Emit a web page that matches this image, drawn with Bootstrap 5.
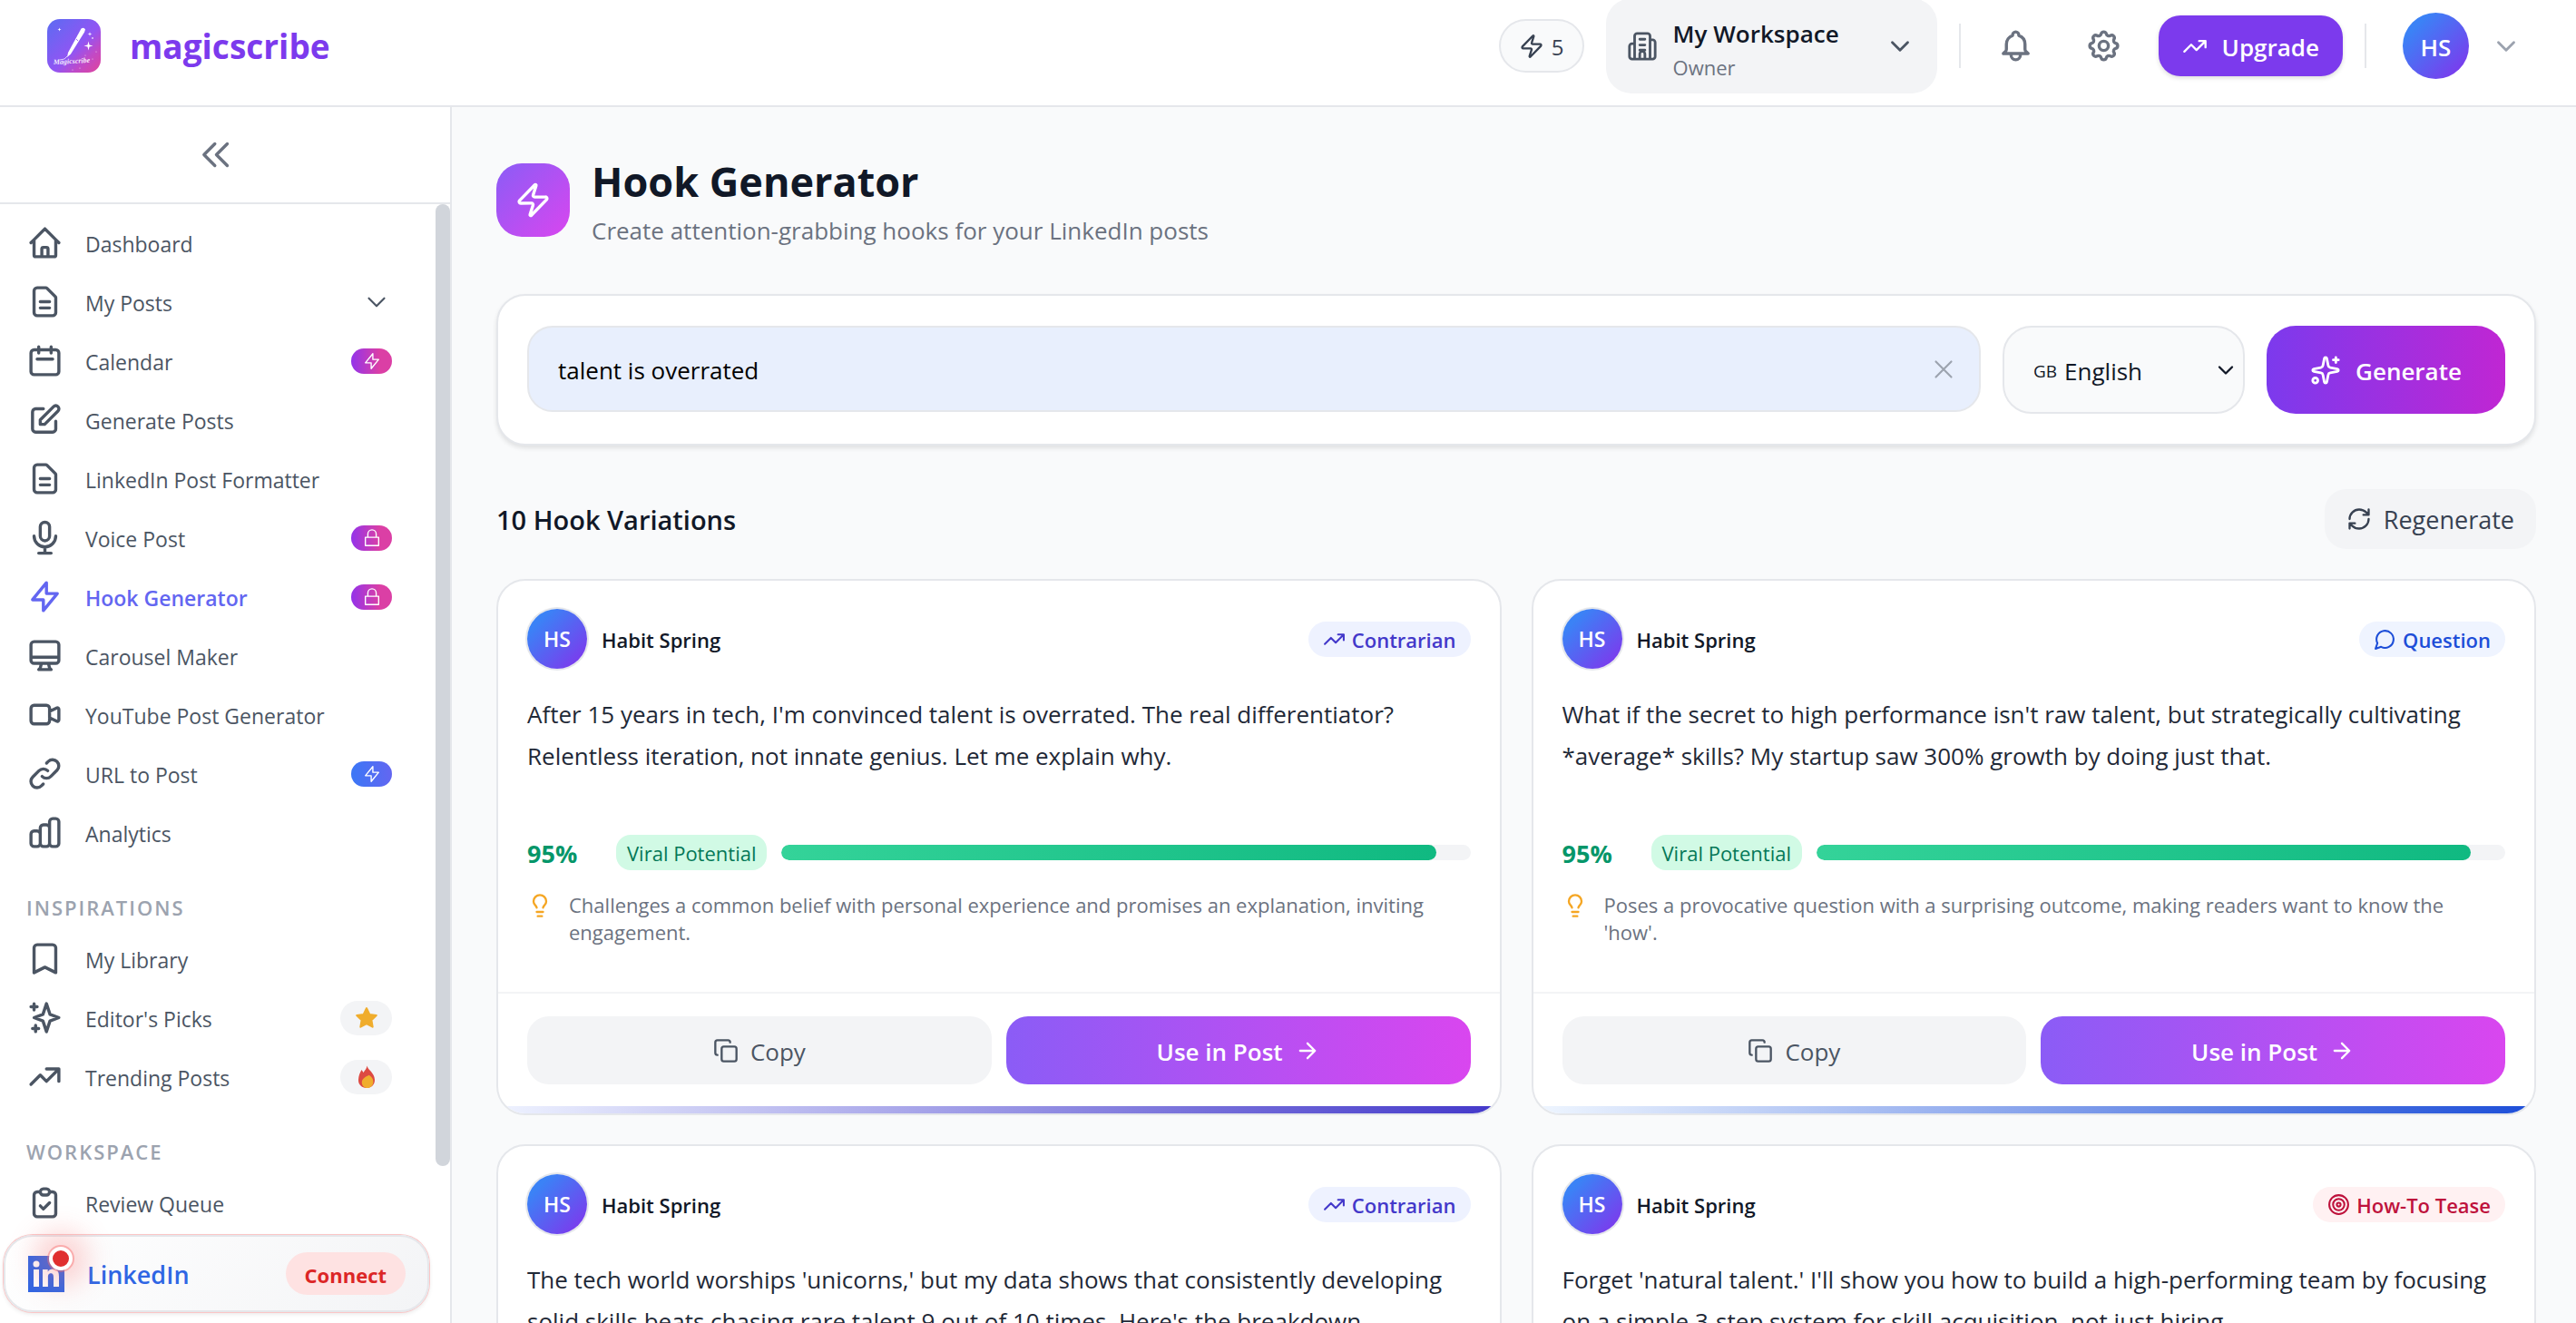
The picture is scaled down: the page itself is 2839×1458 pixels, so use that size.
<!DOCTYPE html>
<html lang="en">
<head>
<meta charset="utf-8">
<meta name="viewport" content="width=device-width, initial-scale=1">
<title>magicscribe – Hook Generator</title>
<link href="https://cdn.jsdelivr.net/npm/bootstrap@5.3.0/dist/css/bootstrap.min.css" rel="stylesheet">
<style>
  :root { --line:#e5e7eb; --ink:#111827; --muted:#6b7280; --slate:#4b5563; --violet:#7c3aed; }
  body { font-family:"Open Sans","Noto Sans",sans-serif; font-size:26px; line-height:40px; color:var(--ink); background:#f9fafb; }
  a { text-decoration:none; }
  button, .btn { font-family:inherit; }
  .fw-semibold { font-weight:600 !important; }
  .ico { fill:none; stroke:currentColor; stroke-width:2; stroke-linecap:round; stroke-linejoin:round; flex:none; display:block; }
  .ico-xl { width:41px; height:41px; }
  .ico-lg { width:34px; height:34px; }
  .ico-md { width:28px; height:28px; }
  .ico-sm { width:25px; height:25px; }
  .thin { stroke-width:1.5; }
  .cap { padding-top:2px; }

  /* top bar */
  .topbar { height:118px; padding:0 44px 15px 52px; border-bottom:2px solid var(--line); background:#fff; }
  .brandlink { gap:32px; }
  .brandmark { width:59px; height:59px; }
  .brandname { font-size:37px; font-weight:700; color:var(--violet); }
  .tools { gap:24px; }
  .credits { height:59px; width:94px; gap:8px; border:2px solid var(--line); background:#f9fafb; font-size:24px; color:#374151; }
  .workspace { height:105px; min-width:365px; padding:0 24px 0 23px; gap:17px; border:0; border-radius:28px; background:#f3f4f6; color:var(--slate); text-align:left; }
  .workspace-text { padding-top:6px; }
  .workspace-name { font-weight:600; color:var(--ink); line-height:40px; }
  .workspace-role { font-size:22px; line-height:34px; color:var(--muted); }
  .rule { width:2px; height:49px; background:var(--line); }
  .iconbtn { padding:16px; border:0; background:none; color:var(--muted); }
  .upgrade { height:67px; padding:0 26px; gap:16px; border:0; border-radius:24px; background:var(--violet); color:#fff; font-weight:600; box-shadow:0 2px 5px rgba(0,0,0,.14); }
  .user { padding:0 16px; gap:24px; border:0; background:none; color:#9ca3af; }
  .face { display:flex; align-items:center; justify-content:center; border-radius:50%; background:linear-gradient(135deg,#3b82f6 20%,#7c3aed 90%); color:#fff; font-weight:600; }
  .face-lg { width:73px; height:73px; font-size:26px; }
  .face-md { width:66px; height:66px; font-size:23px; box-shadow:0 0 0 2px var(--line); }

  /* sidebar */
  .side { width:498px; flex:none; border-right:2px solid var(--line); background:#fff; }
  .collapse-row { height:107px; padding-right:20px; border-bottom:2px solid var(--line); }
  .collapse-row button { border:0; background:none; color:var(--muted); padding:0; }
  .menu { padding-top:10px; }
  .menu a { height:65px; padding:0 48px 0 29px; gap:24px; font-size:23px; color:var(--slate); }
  .menu a.current { color:#6366f1; font-weight:600; }
  .menu h2 { margin:0; padding:34px 0 8px 29px; font-size:22px; line-height:32px; font-weight:600; letter-spacing:2px; color:#9ca3af; }
  .tag { width:45px; height:28px; color:#fff; }
  .tag svg { width:22px; height:22px; }
  .tag-hot { background:linear-gradient(90deg,#9333ea,#db3fa5 70%); }
  .tag-blue { background:linear-gradient(90deg,#3b77f6,#6366f1); }
  .tag-emoji { width:57px; height:38px; background:#f3f4f6; }
  .tag-emoji svg { width:26px; height:26px; }
  .track { width:16px; flex:none; }
  .thumb { height:86%; border-radius:8px; background:#d1d5db; }
  .connect { left:4px; right:23px; bottom:12px; height:85px; padding:0 24px 0 25px; gap:25px; border:2px solid var(--line); border-radius:32px; background:linear-gradient(135deg,#fff,#f3f4f6); box-shadow:0 0 0 1px #fbc6c6,0 2px 5px rgba(0,0,0,.1); color:#2f66e4; }
  .connect-name { font-size:27px; font-weight:600; }
  .connect-pill { height:47px; padding:0 21px; background:#fee2e2; color:#dc2626; font-size:22px; font-weight:700; }
  .ping { width:26px; height:26px; right:-9px; top:-10px; border:4px solid #fff; border-radius:50%; background:#e02f2f; box-shadow:0 0 0 2px rgba(248,113,113,.45),0 0 28px 18px rgba(248,113,113,.28); }

  /* page */
  .page { padding:48px 44px 0 49px; }
  .page-icon { width:81px; height:81px; border-radius:28px; background:linear-gradient(135deg,#8b5cf6,#d946ef); color:#fff; }
  .page-title { margin:0; font-size:45px; line-height:68px; font-weight:700; }
  .page-sub { margin:0; line-height:41px; color:var(--muted); }
  .panel { background:#fff; border:2px solid var(--line); border-radius:32px; }
  .ask { margin-top:49px; padding:33px 32px; gap:24px; box-shadow:0 3px 5px rgba(0,0,0,.1); }
  .ask-input { height:95px; padding:2px 80px 0 32px; border:2px solid var(--line); border-radius:28px; background:#e8effd; font-size:26px; color:#000; }
  .ask-clear { right:24px; top:31px; border:0; padding:0; background:none; color:#9ca3af; }
  .lang { width:267px; height:97px; padding:0 5px 0 32px; gap:8px; border:2px solid var(--line); border-radius:32px; background:#f9fafb; }
  .lang-code { font-size:19px; font-weight:500; }
  .lang select { appearance:none; border:0; background:none; flex:1; min-width:0; font:inherit; color:inherit; padding:2px 0 0; }
  .generate { width:263px; height:97px; gap:16px; border:0; border-radius:32px; background:linear-gradient(90deg,#7c3aed,#c026d3); color:#fff; font-weight:600; }
  .results { margin:48px 0 33px; }
  .results h2 { margin:0; font-size:29px; font-weight:600; line-height:40px; }
  .regen { height:66px; padding:0 24px; gap:13px; border:0; border-radius:24px; background:#f3f4f6; color:#374151; font-size:27px; font-weight:500; }
  .hooks { --bs-gutter-x:33px; --bs-gutter-y:32px; }
  .hook { overflow:hidden; }
  .hook-body { padding:31px 32px 51px; }
  .hook-name { font-size:22px; font-weight:600; }
  .kind { height:39px; padding:0 16px; gap:7px; font-size:22px; font-weight:600; }
  .kind-indigo { background:#eef2ff; color:#4338ca; }
  .kind-blue { background:#eff4ff; color:#1d4ed8; }
  .kind-rose { background:#fff1f2; color:#be123c; }
  .hook-text { margin:27px 0 18px; min-height:138px; line-height:46px; color:#1f2937; }
  .score { height:39px; gap:16px; }
  .score-num { min-width:82px; font-size:27px; font-weight:700; color:#059669; }
  .score-tag { height:39px; padding:0 12px; border-radius:16px; background:#d1fae5; color:#047857; font-size:22px; }
  .meter { height:17px; background:#f3f4f6; border-radius:9px; }
  .meter .progress-bar { border-radius:9px; background:linear-gradient(90deg,#34d399,#10b981); }
  .why { margin-top:23px; gap:18px; font-size:22px; line-height:30px; color:var(--muted); }
  .why svg { color:#f5a623; margin-top:2px; }
  .hook-foot { padding:25px 32px 24px; gap:16px; border-top:2px solid #f3f4f6; }
  .act { flex:1; height:75px; gap:13px; border:0; border-radius:24px; }
  .act-copy { background:#f3f4f6; color:var(--slate); }
  .act-use { background:linear-gradient(90deg,#8b5cf6,#d946ef); color:#fff; font-weight:600; }
  .strip { height:8px; }
  .strip-indigo { background:linear-gradient(90deg,#eef2ff,#4338ca); }
  .strip-blue { background:linear-gradient(90deg,#eff6ff,#1d4ed8); }
  .strip-rose { background:linear-gradient(90deg,#fff1f2,#be123c); }
</style>
<script src="https://cdn.jsdelivr.net/npm/bootstrap@5.3.0/dist/js/bootstrap.bundle.min.js"></script>
</head>
<body class="vh-100 d-flex flex-column overflow-hidden">

<svg class="d-none" aria-hidden="true">
  <symbol id="home" viewBox="0 0 24 24"><path d="M3 12l2-2m0 0l7-7 7 7M5 10v10a1 1 0 001 1h12a1 1 0 001-1V10l2 2m-2-2M10 21v-5a1 1 0 011-1h2a1 1 0 011 1v5"/></symbol>
  <symbol id="doc" viewBox="0 0 24 24"><path d="M9 12h6m-6 4h6m2 5H7a2 2 0 01-2-2V5a2 2 0 012-2h5.586a1 1 0 01.707.293l5.414 5.414a1 1 0 01.293.707V19a2 2 0 01-2 2z"/></symbol>
  <symbol id="calendar" viewBox="0 0 24 24"><path d="M8 7V3m8 4V3m-9 8h10M5 21h14a2 2 0 002-2V7a2 2 0 00-2-2H5a2 2 0 00-2 2v12a2 2 0 002 2z"/></symbol>
  <symbol id="edit" viewBox="0 0 24 24"><path d="M11 5H6a2 2 0 00-2 2v11a2 2 0 002 2h11a2 2 0 002-2v-5m-1.414-9.414a2 2 0 112.828 2.828L11.828 15H9v-2.828l8.586-8.586z"/></symbol>
  <symbol id="mic" viewBox="0 0 24 24"><path d="M19 11a7 7 0 01-7 7m0 0a7 7 0 01-7-7m7 7v4m0 0H8m4 0h4m-4-8a3 3 0 01-3-3V5a3 3 0 116 0v6a3 3 0 01-3 3z"/></symbol>
  <symbol id="bolt" viewBox="0 0 24 24"><path d="M13 10V3L4 14h7v7l9-11h-7z"/></symbol>
  <symbol id="zap" viewBox="0 0 24 24"><path d="M4 14a1 1 0 0 1-.78-1.63l9.9-10.2a.5.5 0 0 1 .86.46l-1.92 6.02A1 1 0 0 0 13 10h7a1 1 0 0 1 .78 1.63l-9.9 10.2a.5.5 0 0 1-.86-.46l1.92-6.02A1 1 0 0 0 11 14z"/></symbol>
  <symbol id="desktop" viewBox="0 0 24 24"><path d="M9.75 17L9 20l-1 1h8l-1-1-.75-3M3 13h18M5 17h14a2 2 0 002-2V5a2 2 0 00-2-2H5a2 2 0 00-2 2v10a2 2 0 002 2z"/></symbol>
  <symbol id="video" viewBox="0 0 24 24"><path d="M15 10l4.553-2.276A1 1 0 0121 8.618v6.764a1 1 0 01-1.447.894L15 14M5 18h8a2 2 0 002-2V8a2 2 0 00-2-2H5a2 2 0 00-2 2v8a2 2 0 002 2z"/></symbol>
  <symbol id="chain" viewBox="0 0 24 24"><path d="M13.828 10.172a4 4 0 00-5.656 0l-4 4a4 4 0 105.656 5.656l1.102-1.101m-.758-4.899a4 4 0 005.656 0l4-4a4 4 0 00-5.656-5.656l-1.1 1.1"/></symbol>
  <symbol id="chart" viewBox="0 0 24 24"><path d="M9 19v-6a2 2 0 00-2-2H5a2 2 0 00-2 2v6a2 2 0 002 2h2a2 2 0 002-2zm0 0V9a2 2 0 012-2h2a2 2 0 012 2v10m-6 0a2 2 0 002 2h2a2 2 0 002-2m0 0V5a2 2 0 012-2h2a2 2 0 012 2v14a2 2 0 01-2 2h-2a2 2 0 01-2-2z"/></symbol>
  <symbol id="bookmark" viewBox="0 0 24 24"><path d="M5 5a2 2 0 012-2h10a2 2 0 012 2v16l-7-3.5L5 21V5z"/></symbol>
  <symbol id="sparkles" viewBox="0 0 24 24"><path d="M5 3v4M3 5h4M6 17v4m-2-2h4m5-16l2.286 6.857L21 12l-5.714 2.143L13 21l-2.286-6.857L5 12l5.714-2.143L13 3z"/></symbol>
  <symbol id="trend" viewBox="0 0 24 24"><path d="M13 7h8m0 0v8m0-8l-8 8-4-4-6 6"/></symbol>
  <symbol id="trend2" viewBox="0 0 24 24"><path d="M16 7h6v6M22 7l-8.5 8.5-5-5L2 17"/></symbol>
  <symbol id="clipboard" viewBox="0 0 24 24"><path d="M9 5H7a2 2 0 00-2 2v12a2 2 0 002 2h10a2 2 0 002-2V7a2 2 0 00-2-2h-2M9 5a2 2 0 002 2h2a2 2 0 002-2M9 5a2 2 0 012-2h2a2 2 0 012 2m-6 9l2 2 4-4"/></symbol>
  <symbol id="dleft" viewBox="0 0 24 24"><path d="M11 19l-7-7 7-7m8 14l-7-7 7-7"/></symbol>
  <symbol id="down" viewBox="0 0 24 24"><path d="M6 9l6 6 6-6"/></symbol>
  <symbol id="lock" viewBox="0 0 24 24"><path d="M4 11h16v10H4zM7 11V7a5 5 0 0110 0v4"/></symbol>
  <symbol id="building" viewBox="0 0 24 24"><path d="M6 22V4a2 2 0 012-2h8a2 2 0 012 2v18M6 10H4a2 2 0 00-2 2v8a2 2 0 002 2h16a2 2 0 002-2V9a2 2 0 00-2-2h-2M10 6.500h4M10 11h4M10 22v-4a2 2 0 014 0v4M10 15h4"/></symbol>
  <symbol id="bell" viewBox="0 0 24 24"><path d="M15 17h5l-1.405-1.405A2.032 2.032 0 0118 14.158V11a6.002 6.002 0 00-4-5.659V5a2 2 0 10-4 0v.341C7.670 6.165 6 8.388 6 11v3.159c0 .538-.214 1.055-.595 1.436L4 17h5m6 0v1a3 3 0 11-6 0v-1m6 0H9"/></symbol>
  <symbol id="gear" viewBox="0 0 24 24"><path d="M10.325 4.317c.426-1.756 2.924-1.756 3.350 0a1.724 1.724 0 002.573 1.066c1.543-.940 3.310.826 2.370 2.370a1.724 1.724 0 001.065 2.572c1.756.426 1.756 2.924 0 3.350a1.724 1.724 0 00-1.066 2.573c.940 1.543-.826 3.310-2.370 2.370a1.724 1.724 0 00-2.572 1.065c-.426 1.756-2.924 1.756-3.350 0a1.724 1.724 0 00-2.573-1.066c-1.543.940-3.310-.826-2.370-2.370a1.724 1.724 0 00-1.065-2.572c-1.756-.426-1.756-2.924 0-3.350a1.724 1.724 0 001.066-2.573c-.940-1.543.826-3.310 2.370-2.370.996.608 2.296.070 2.572-1.065z"/><path d="M15 12a3 3 0 11-6 0 3 3 0 016 0z"/></symbol>
  <symbol id="close" viewBox="0 0 24 24"><path d="M18 6L6 18M6 6l12 12"/></symbol>
  <symbol id="magic" viewBox="0 0 24 24"><path d="M11.017 2.814a1 1 0 0 1 1.966 0l1.051 5.558a2 2 0 0 0 1.594 1.594l5.558 1.051a1 1 0 0 1 0 1.966l-5.558 1.051a2 2 0 0 0-1.594 1.594l-1.051 5.558a1 1 0 0 1-1.966 0l-1.051-5.558a2 2 0 0 0-1.594-1.594l-5.558-1.051a1 1 0 0 1 0-1.966l5.558-1.051a2 2 0 0 0 1.594-1.594zM20 2v4M22 4h-4"/><circle cx="4" cy="20" r="2"/></symbol>
  <symbol id="refresh" viewBox="0 0 24 24"><path d="M3 12a9 9 0 0 1 9-9 9.750 9.750 0 0 1 6.740 2.740L21 8M21 3v5h-5M21 12a9 9 0 0 1-9 9 9.750 9.750 0 0 1-6.740-2.740L3 16M8 16H3v5"/></symbol>
  <symbol id="bubble" viewBox="0 0 24 24"><path d="M7.900 20A9 9 0 1 0 4 16.100L2 22Z"/></symbol>
  <symbol id="target" viewBox="0 0 24 24"><circle cx="12" cy="12" r="10"/><circle cx="12" cy="12" r="6"/><circle cx="12" cy="12" r="2"/></symbol>
  <symbol id="bulb" viewBox="0 0 24 24"><path d="M15 14c.2-1 .7-1.700 1.500-2.500 1-.9 1.500-2.200 1.500-3.500A6 6 0 0 0 6 8c0 1 .2 2.200 1.500 3.500.7.7 1.300 1.500 1.500 2.500M9 18h6M10 22h4"/></symbol>
  <symbol id="copy" viewBox="0 0 24 24"><rect x="8" y="8" width="14" height="14" rx="2"/><path d="M4 16c-1.100 0-2-.9-2-2V4c0-1.100.9-2 2-2h10c1.100 0 2 .9 2 2"/></symbol>
  <symbol id="arrow" viewBox="0 0 24 24"><path d="M5 12h14M12 5l7 7-7 7"/></symbol>
</svg>

<header class="topbar d-flex align-items-center justify-content-between flex-shrink-0">
  <a href="#" class="brandlink d-flex align-items-center">
    <svg class="brandmark" viewBox="0 0 59 59" role="img" aria-label="magicscribe logo">
      <defs><linearGradient id="lg" x1="0" y1="0" x2="1" y2="1"><stop offset="0" stop-color="#5b6cf2"/><stop offset=".55" stop-color="#9155f3"/><stop offset=".75" stop-color="#c04ac8"/><stop offset="1" stop-color="#e0439b"/></linearGradient></defs>
      <rect width="59" height="59" rx="14" fill="url(#lg)"/>
      <path d="M37.500 10.500q3-2 4.500 1l-1 3-15 24-4 3.500 1-5z" fill="#fff"/>
      <path d="M32 22l2 2" stroke="#a66bf5" stroke-width="1"/>
      <path d="M22 41q-2 4-8 4" fill="none" stroke="#fff" stroke-opacity=".7"/>
      <path d="M45.500 24.500l1 4 4 1-4 1-1 4-1-4-4-1 4-1zM47 14l.5 2 2 .5-2 .5-.5 2-.5-2-2-.5 2-.5zM13.500 9.500l.5 1.500 1.500.5-1.500.5-.5 1.500-.5-1.500-1.500-.5 1.500-.5z" fill="#fff"/>
      <g fill="#fff" fill-opacity=".7"><circle cx="50" cy="21" r="1"/><circle cx="54" cy="36" r=".6"/><circle cx="42" cy="40" r=".6"/><circle cx="36" cy="54" r=".6"/><circle cx="28" cy="56" r=".6"/><circle cx="50" cy="44" r=".6"/></g>
      <text x="7" y="50" fill="#fff" fill-opacity=".9" font-family="Liberation Serif" font-style="italic" font-weight="700" font-size="8" transform="rotate(-3 7 50)">Magicscribe</text>
    </svg>
    <span class="brandname">magicscribe</span>
  </a>
  <div class="tools d-flex align-items-center">
    <div class="credits rounded-pill d-flex align-items-center justify-content-center">
      <svg class="ico ico-md"><use href="#zap"/></svg><span class="cap">5</span>
    </div>
    <button type="button" class="workspace d-flex align-items-center">
      <svg class="ico ico-lg"><use href="#building"/></svg>
      <span class="workspace-text d-flex flex-column"><span class="workspace-name">My Workspace</span><span class="workspace-role">Owner</span></span>
      <svg class="ico ico-lg ms-auto"><use href="#down"/></svg>
    </button>
    <div class="rule"></div>
    <button type="button" class="iconbtn" aria-label="Notifications"><svg class="ico ico-xl"><use href="#bell"/></svg></button>
    <button type="button" class="iconbtn" aria-label="Settings"><svg class="ico ico-xl"><use href="#gear"/></svg></button>
    <button type="button" class="upgrade d-flex align-items-center"><svg class="ico ico-md"><use href="#trend2"/></svg><span class="cap">Upgrade</span></button>
    <div class="rule"></div>
    <button type="button" class="user d-flex align-items-center" aria-label="Account"><span class="face face-lg cap">HS</span><svg class="ico ico-lg"><use href="#down"/></svg></button>
  </div>
</header>

<div class="d-flex flex-grow-1 overflow-hidden">
  <aside class="side position-relative d-flex flex-column">
    <div class="collapse-row d-flex align-items-center justify-content-center flex-shrink-0">
      <button type="button" aria-label="Collapse sidebar"><svg class="ico ico-xl"><use href="#dleft"/></svg></button>
    </div>
    <div class="d-flex flex-grow-1 overflow-hidden">
      <nav class="menu flex-grow-1" aria-label="Main">
        <a href="#" class="d-flex align-items-center"><svg class="ico ico-xl"><use href="#home"/></svg><span class="cap">Dashboard</span></a>
        <a href="#" class="d-flex align-items-center"><svg class="ico ico-xl"><use href="#doc"/></svg><span class="cap me-auto">My Posts</span><svg class="ico ico-lg thin"><use href="#down"/></svg></a>
        <a href="#" class="d-flex align-items-center"><svg class="ico ico-xl"><use href="#calendar"/></svg><span class="cap me-auto">Calendar</span><span class="tag tag-hot rounded-pill d-flex align-items-center justify-content-center"><svg class="ico thin"><use href="#bolt"/></svg></span></a>
        <a href="#" class="d-flex align-items-center"><svg class="ico ico-xl"><use href="#edit"/></svg><span class="cap">Generate Posts</span></a>
        <a href="#" class="d-flex align-items-center"><svg class="ico ico-xl"><use href="#doc"/></svg><span class="cap">LinkedIn Post Formatter</span></a>
        <a href="#" class="d-flex align-items-center"><svg class="ico ico-xl"><use href="#mic"/></svg><span class="cap me-auto">Voice Post</span><span class="tag tag-hot rounded-pill d-flex align-items-center justify-content-center"><svg class="ico thin"><use href="#lock"/></svg></span></a>
        <a href="#" class="current d-flex align-items-center" aria-current="page"><svg class="ico ico-xl"><use href="#bolt"/></svg><span class="cap me-auto">Hook Generator</span><span class="tag tag-hot rounded-pill d-flex align-items-center justify-content-center"><svg class="ico thin"><use href="#lock"/></svg></span></a>
        <a href="#" class="d-flex align-items-center"><svg class="ico ico-xl"><use href="#desktop"/></svg><span class="cap">Carousel Maker</span></a>
        <a href="#" class="d-flex align-items-center"><svg class="ico ico-xl"><use href="#video"/></svg><span class="cap">YouTube Post Generator</span></a>
        <a href="#" class="d-flex align-items-center"><svg class="ico ico-xl"><use href="#chain"/></svg><span class="cap me-auto">URL to Post</span><span class="tag tag-blue rounded-pill d-flex align-items-center justify-content-center"><svg class="ico thin"><use href="#bolt"/></svg></span></a>
        <a href="#" class="d-flex align-items-center"><svg class="ico ico-xl"><use href="#chart"/></svg><span class="cap">Analytics</span></a>
        <h2>INSPIRATIONS</h2>
        <a href="#" class="d-flex align-items-center"><svg class="ico ico-xl"><use href="#bookmark"/></svg><span class="cap">My Library</span></a>
        <a href="#" class="d-flex align-items-center"><svg class="ico ico-xl"><use href="#sparkles"/></svg><span class="cap me-auto">Editor's Picks</span>
          <span class="tag-emoji rounded-pill d-flex align-items-center justify-content-center"><svg viewBox="0 0 24 24"><path d="M12 2l3 6.300 6.900.9-5 4.800 1.200 6.900L12 17.600l-6.100 3.300L7.100 14l-5-4.800L9 8.300z" fill="#f0ad2d" stroke="#f0ad2d" stroke-width="2" stroke-linejoin="round"/></svg></span></a>
        <a href="#" class="d-flex align-items-center"><svg class="ico ico-xl"><use href="#trend"/></svg><span class="cap me-auto">Trending Posts</span>
          <span class="tag-emoji rounded-pill d-flex align-items-center justify-content-center"><svg viewBox="0 0 24 24"><path d="M12.500.5c.5 4 7.500 7 7.800 14 .2 5-3.300 8.500-8.300 8.500s-8.600-3.700-8.300-8.500C4 10.500 5 7.500 7 4.500l1.800 2.800C10.500 5 12 3.500 12.500.5z" fill="#dd4a42"/><path d="M14.500 10c2.500 1.500 4.500 4 4.300 7-.2 3.600-2.800 6-6 6s-5.800-2.500-5.600-6 4.300-5.500 7.300-7z" fill="#f0ad2d"/></svg></span></a>
        <h2>WORKSPACE</h2>
        <a href="#" class="d-flex align-items-center"><svg class="ico ico-xl"><use href="#clipboard"/></svg><span class="cap">Review Queue</span></a>
      </nav>
      <div class="track"><div class="thumb"></div></div>
    </div>
    <a href="#" class="connect position-absolute d-flex align-items-center">
      <span class="position-relative">
        <svg width="40" height="40" viewBox="0 0 40 40" class="d-block"><path d="M0 0h40v40H0z" fill="#2f66e4"/><g fill="#fff"><circle cx="9" cy="9" r="3.500"/><path d="M6 15h6v19H6zM16 15h5.700v2.600c1-1.800 3-3.100 5.800-3.100 5.500 0 6.500 3.600 6.500 8.500v11h-6V24c0-2.300-.2-4.800-2.900-4.800-2.800 0-3.200 2.200-3.200 4.600V34H16z"/></g></svg>
        <span class="ping position-absolute"></span>
      </span>
      <span class="connect-name me-auto cap">LinkedIn</span>
      <span class="connect-pill rounded-pill d-flex align-items-center"><span class="cap">Connect</span></span>
    </a>
  </aside>

  <main class="page flex-grow-1 overflow-hidden">
    <div class="d-flex align-items-center gap-4">
      <div class="page-icon d-flex align-items-center justify-content-center"><svg class="ico ico-xl"><use href="#zap"/></svg></div>
      <div><h1 class="page-title">Hook Generator</h1><p class="page-sub">Create attention-grabbing hooks for your LinkedIn posts</p></div>
    </div>

    <form class="ask panel d-flex align-items-start" onsubmit="return false">
      <div class="position-relative flex-grow-1">
        <input class="ask-input w-100 d-block" type="text" value="talent is overrated" aria-label="Topic">
        <button type="button" class="ask-clear position-absolute" aria-label="Clear"><svg class="ico ico-lg thin"><use href="#close"/></svg></button>
      </div>
      <div class="lang d-flex align-items-center">
        <span class="lang-code cap" aria-hidden="true">GB</span>
        <select aria-label="Language"><option>English</option></select>
        <svg class="ico ico-md"><use href="#down"/></svg>
      </div>
      <button type="button" class="generate d-flex align-items-center justify-content-center"><svg class="ico ico-lg"><use href="#magic"/></svg><span class="cap">Generate</span></button>
    </form>

    <div class="results d-flex align-items-center justify-content-between">
      <h2 class="cap">10 Hook Variations</h2>
      <button type="button" class="regen d-flex align-items-center"><svg class="ico ico-md"><use href="#refresh"/></svg><span class="cap">Regenerate</span></button>
    </div>

    <div class="hooks row row-cols-2">
      <div class="col">
        <article class="hook panel">
          <div class="hook-body">
            <div class="d-flex align-items-center gap-3"><span class="face face-md">HS</span><span class="hook-name me-auto cap">Habit Spring</span>
              <span class="kind kind-indigo rounded-pill d-flex align-items-center"><svg class="ico ico-sm"><use href="#trend2"/></svg><span class="cap">Contrarian</span></span></div>
            <p class="hook-text">After 15 years in tech, I'm convinced talent is overrated. The real differentiator?<br>Relentless iteration, not innate genius. Let me explain why.</p>
            <div class="score d-flex align-items-center"><span class="score-num cap">95%</span><span class="score-tag d-flex align-items-center">Viral Potential</span>
              <div class="meter progress flex-grow-1" role="progressbar" aria-label="Viral potential" aria-valuenow="95" aria-valuemin="0" aria-valuemax="100"><div class="progress-bar" style="width:95%"></div></div></div>
            <div class="why d-flex align-items-start"><svg class="ico ico-md"><use href="#bulb"/></svg><span>Challenges a common belief with personal experience and promises an explanation, inviting<br>engagement.</span></div>
          </div>
          <div class="hook-foot d-flex"><button type="button" class="act act-copy d-flex align-items-center justify-content-center"><svg class="ico ico-md"><use href="#copy"/></svg><span class="cap">Copy</span></button><button type="button" class="act act-use d-flex align-items-center justify-content-center"><span class="cap">Use in Post</span><svg class="ico ico-md"><use href="#arrow"/></svg></button></div>
          <div class="strip strip-indigo"></div>
        </article>
      </div>
      <div class="col">
        <article class="hook panel">
          <div class="hook-body">
            <div class="d-flex align-items-center gap-3"><span class="face face-md">HS</span><span class="hook-name me-auto cap">Habit Spring</span>
              <span class="kind kind-blue rounded-pill d-flex align-items-center"><svg class="ico ico-sm"><use href="#bubble"/></svg><span class="cap">Question</span></span></div>
            <p class="hook-text">What if the secret to high performance isn't raw talent, but strategically cultivating<br>*average* skills? My startup saw 300% growth by doing just that.</p>
            <div class="score d-flex align-items-center"><span class="score-num cap">95%</span><span class="score-tag d-flex align-items-center">Viral Potential</span>
              <div class="meter progress flex-grow-1" role="progressbar" aria-label="Viral potential" aria-valuenow="95" aria-valuemin="0" aria-valuemax="100"><div class="progress-bar" style="width:95%"></div></div></div>
            <div class="why d-flex align-items-start"><svg class="ico ico-md"><use href="#bulb"/></svg><span>Poses a provocative question with a surprising outcome, making readers want to know the<br>'how'.</span></div>
          </div>
          <div class="hook-foot d-flex"><button type="button" class="act act-copy d-flex align-items-center justify-content-center"><svg class="ico ico-md"><use href="#copy"/></svg><span class="cap">Copy</span></button><button type="button" class="act act-use d-flex align-items-center justify-content-center"><span class="cap">Use in Post</span><svg class="ico ico-md"><use href="#arrow"/></svg></button></div>
          <div class="strip strip-blue"></div>
        </article>
      </div>
      <div class="col">
        <article class="hook panel">
          <div class="hook-body">
            <div class="d-flex align-items-center gap-3"><span class="face face-md">HS</span><span class="hook-name me-auto cap">Habit Spring</span>
              <span class="kind kind-indigo rounded-pill d-flex align-items-center"><svg class="ico ico-sm"><use href="#trend2"/></svg><span class="cap">Contrarian</span></span></div>
            <p class="hook-text">The tech world worships 'unicorns,' but my data shows that consistently developing<br>solid skills beats chasing rare talent 9 out of 10 times. Here's the breakdown.</p>
          </div>
          <div class="strip strip-indigo"></div>
        </article>
      </div>
      <div class="col">
        <article class="hook panel">
          <div class="hook-body">
            <div class="d-flex align-items-center gap-3"><span class="face face-md">HS</span><span class="hook-name me-auto cap">Habit Spring</span>
              <span class="kind kind-rose rounded-pill d-flex align-items-center"><svg class="ico ico-sm"><use href="#target"/></svg><span class="cap">How-To Tease</span></span></div>
            <p class="hook-text">Forget 'natural talent.' I'll show you how to build a high-performing team by focusing<br>on a simple 3-step system for skill acquisition, not just hiring.</p>
          </div>
          <div class="strip strip-rose"></div>
        </article>
      </div>
    </div>
  </main>
</div>
</body>
</html>
